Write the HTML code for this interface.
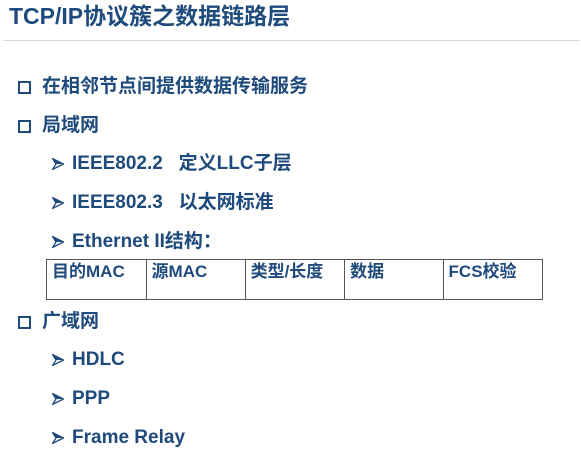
<!DOCTYPE html>
<html><head><meta charset="utf-8"><style>
body{margin:0;width:581px;height:463px;background:#fff;overflow:hidden;position:relative;font-family:"Liberation Sans","Noto Sans CJK SC",sans-serif;color:#1f4a7c;font-weight:bold}
.t{position:absolute;left:9px;top:1px;font-size:23px;white-space:nowrap;line-height:30px}
.rule{position:absolute;left:3px;top:40px;width:577px;height:1px;background:#d9d9d9}
.l{position:absolute;font-size:19px;white-space:nowrap;line-height:22px}
.sq{position:absolute;left:18px;width:9px;height:9px;border:2px solid #1f4a7c}
.ar{position:absolute;left:52px;width:12px;height:12px}
table{position:absolute;left:46px;top:259px;border-collapse:collapse;width:497px;height:41px}
td{border:1.5px solid #555;vertical-align:top;font-size:17px;padding:2px 5px;width:89px;line-height:20px;white-space:nowrap}
</style></head><body>
<div class="t">TCP/IP协议簇之数据链路层</div>
<div class="rule"></div>
<div class="sq" style="top:81px"></div><div class="l" style="left:42px;top:76px">在相邻节点间提供数据传输服务</div>
<div class="sq" style="top:120px"></div><div class="l" style="left:42px;top:115px">局域网</div>
<svg class="ar" style="top:158px" viewBox="0 0 12 12"><path d="M0.5 0.5L11.5 6L0.5 11.5L4 6Z" fill="none" stroke="#1f4a7c" stroke-width="1.3"/><path d="M0.5 0.5L11.5 6L4 6Z" fill="#1f4a7c"/></svg>
<div class="l" style="left:72px;top:153px">IEEE802.2&nbsp;&nbsp;&nbsp;定义LLC子层</div>
<svg class="ar" style="top:197px" viewBox="0 0 12 12"><path d="M0.5 0.5L11.5 6L0.5 11.5L4 6Z" fill="none" stroke="#1f4a7c" stroke-width="1.3"/><path d="M0.5 0.5L11.5 6L4 6Z" fill="#1f4a7c"/></svg>
<div class="l" style="left:72px;top:192px">IEEE802.3&nbsp;&nbsp;&nbsp;以太网标准</div>
<svg class="ar" style="top:236px" viewBox="0 0 12 12"><path d="M0.5 0.5L11.5 6L0.5 11.5L4 6Z" fill="none" stroke="#1f4a7c" stroke-width="1.3"/><path d="M0.5 0.5L11.5 6L4 6Z" fill="#1f4a7c"/></svg>
<div class="l" style="left:72px;top:231px">Ethernet II结构：</div>
<table><tr><td>目的MAC</td><td>源MAC</td><td>类型/长度</td><td>数据</td><td>FCS校验</td></tr></table>
<div class="sq" style="top:316px"></div><div class="l" style="left:42px;top:311px">广域网</div>
<svg class="ar" style="top:354px" viewBox="0 0 12 12"><path d="M0.5 0.5L11.5 6L0.5 11.5L4 6Z" fill="none" stroke="#1f4a7c" stroke-width="1.3"/><path d="M0.5 0.5L11.5 6L4 6Z" fill="#1f4a7c"/></svg>
<div class="l" style="left:72px;top:349px">HDLC</div>
<svg class="ar" style="top:393px" viewBox="0 0 12 12"><path d="M0.5 0.5L11.5 6L0.5 11.5L4 6Z" fill="none" stroke="#1f4a7c" stroke-width="1.3"/><path d="M0.5 0.5L11.5 6L4 6Z" fill="#1f4a7c"/></svg>
<div class="l" style="left:72px;top:388px">PPP</div>
<svg class="ar" style="top:432px" viewBox="0 0 12 12"><path d="M0.5 0.5L11.5 6L0.5 11.5L4 6Z" fill="none" stroke="#1f4a7c" stroke-width="1.3"/><path d="M0.5 0.5L11.5 6L4 6Z" fill="#1f4a7c"/></svg>
<div class="l" style="left:72px;top:427px">Frame Relay</div>
</body></html>
